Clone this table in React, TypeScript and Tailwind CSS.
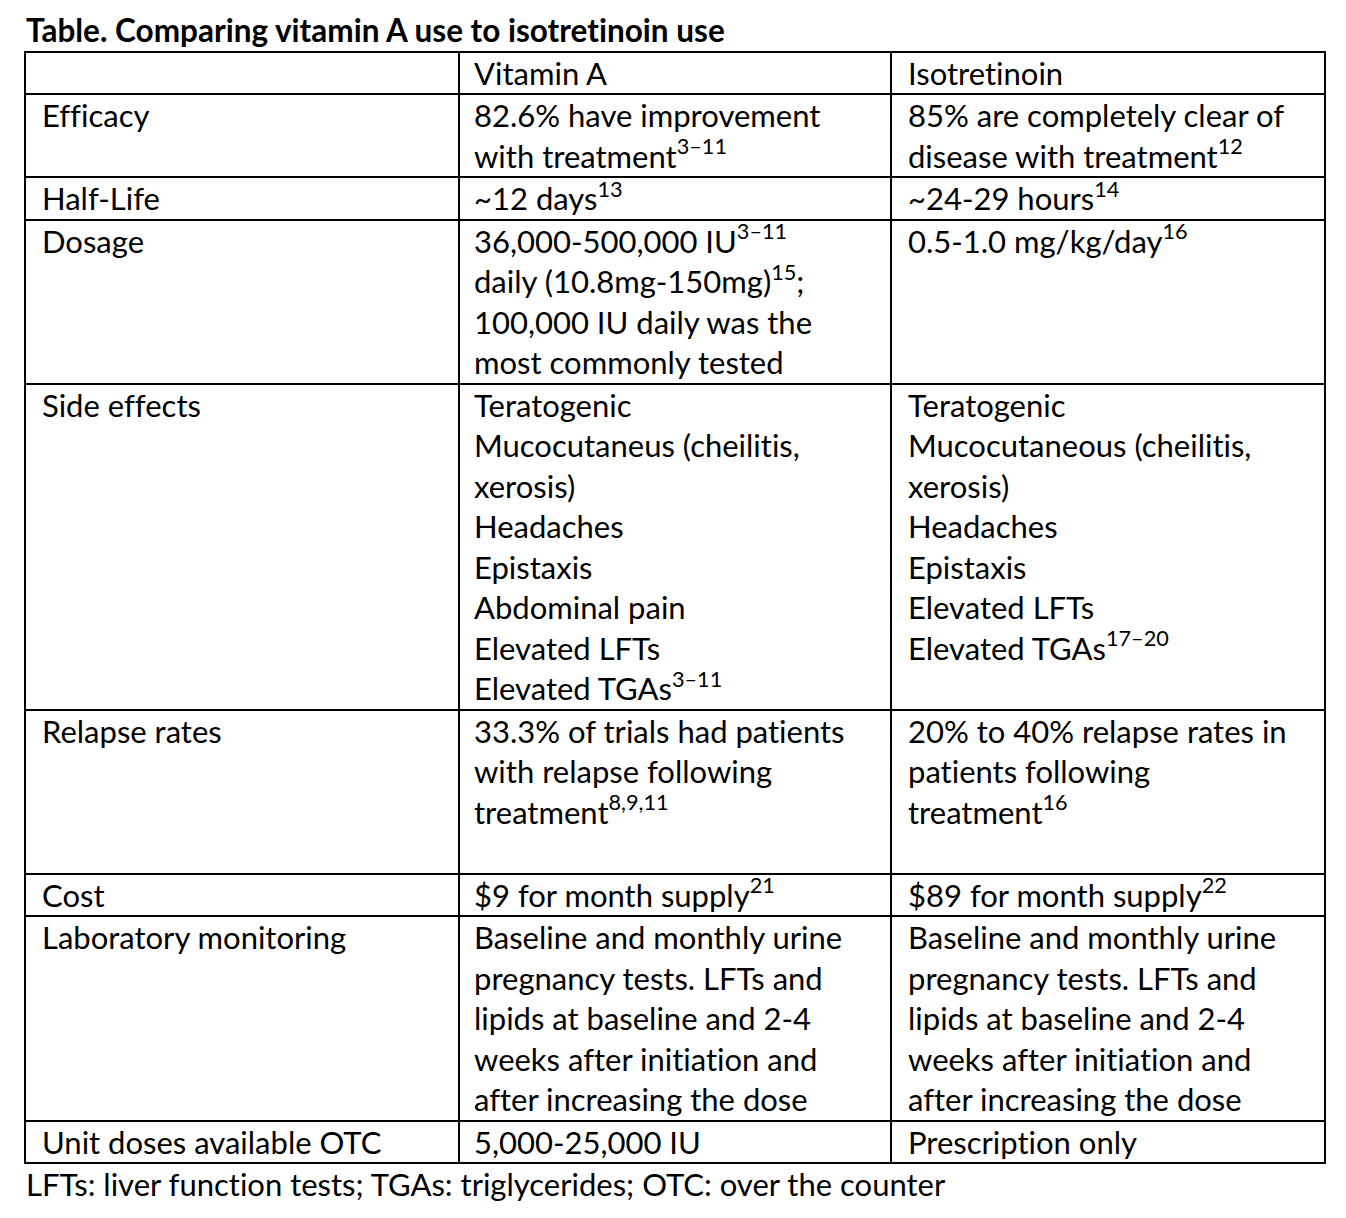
import type { ReactNode } from "react";

type Line = string | { t: string; s: string; after?: string };

type Row = { label: string; a: Line[]; b: Line[] };

const rows: Row[] = [
  { label: "", a: ["Vitamin A"], b: ["Isotretinoin"] },
  {
    label: "Efficacy",
    a: ["82.6% have improvement", { t: "with treatment", s: "3–11" }],
    b: ["85% are completely clear of", { t: "disease with treatment", s: "12" }],
  },
  {
    label: "Half-Life",
    a: [{ t: "~12 days", s: "13" }],
    b: [{ t: "~24-29 hours", s: "14" }],
  },
  {
    label: "Dosage",
    a: [
      { t: "36,000-500,000 IU", s: "3–11" },
      { t: "daily (10.8mg-150mg)", s: "15", after: ";" },
      "100,000 IU daily was the",
      "most commonly tested",
    ],
    b: [{ t: "0.5-1.0 mg/kg/day", s: "16" }],
  },
  {
    label: "Side effects",
    a: [
      "Teratogenic",
      "Mucocutaneus (cheilitis,",
      "xerosis)",
      "Headaches",
      "Epistaxis",
      "Abdominal pain",
      "Elevated LFTs",
      { t: "Elevated TGAs", s: "3–11" },
    ],
    b: [
      "Teratogenic",
      "Mucocutaneous (cheilitis,",
      "xerosis)",
      "Headaches",
      "Epistaxis",
      "Elevated LFTs",
      { t: "Elevated TGAs", s: "17–20" },
    ],
  },
  {
    label: "Relapse rates",
    a: [
      "33.3% of trials had patients",
      "with relapse following",
      { t: "treatment", s: "8,9,11" },
      "",
    ],
    b: ["20% to 40% relapse rates in", "patients following", { t: "treatment", s: "16" }],
  },
  {
    label: "Cost",
    a: [{ t: "$9 for month supply", s: "21" }],
    b: [{ t: "$89 for month supply", s: "22" }],
  },
  {
    label: "Laboratory monitoring",
    a: [
      "Baseline and monthly urine",
      "pregnancy tests. LFTs and",
      "lipids at baseline and 2-4",
      "weeks after initiation and",
      "after increasing the dose",
    ],
    b: [
      "Baseline and monthly urine",
      "pregnancy tests. LFTs and",
      "lipids at baseline and 2-4",
      "weeks after initiation and",
      "after increasing the dose",
    ],
  },
  { label: "Unit doses available OTC", a: ["5,000-25,000 IU"], b: ["Prescription only"] },
];

const renderLine = (line: Line, i: number): ReactNode => {
  if (typeof line === "string") {
    return (
      <div key={i} className="whitespace-nowrap">
        {line === "" ? "\u00a0" : line}
      </div>
    );
  }
  return (
    <div key={i} className="whitespace-nowrap">
      {line.t}
      <sup className="relative -top-[0.6em] align-baseline text-[0.7em] leading-none">{line.s}</sup>
      {line.after}
    </div>
  );
};

const App = () => {
  return (
    <div
      className="min-h-[1218px] w-[1346px] bg-white pt-[10px] text-black [font-variant-ligatures:none]"
      style={{ fontFamily: "Lato, 'Noto Sans', sans-serif" }}
    >
      {/* Caption */}
      <h1 className="ml-[26px] whitespace-nowrap text-[31.5px] font-bold leading-[40.5px]">
        Table. Comparing vitamin A use to isotretinoin use
      </h1>

      {/* Comparison table */}
      <div className="ml-[24px] grid w-[1302px] grid-cols-[434px_432px_434px] border-l-2 border-t-2 border-black text-[31px] leading-[40.5px]">
        {rows.map((row, r) => (
          <div key={r} className="contents">
            <div className="whitespace-nowrap border-b-2 border-r-2 border-black pl-[16px]">
              {row.label === "" ? "\u00a0" : row.label}
            </div>
            <div className="border-b-2 border-r-2 border-black pl-[14px]">{row.a.map(renderLine)}</div>
            <div className="border-b-2 border-r-2 border-black pl-[16px]">{row.b.map(renderLine)}</div>
          </div>
        ))}
      </div>

      <p className="ml-[26px] whitespace-nowrap text-[31px] leading-[40.5px]">
        LFTs: liver function tests; TGAs: triglycerides; OTC: over the counter
      </p>
    </div>
  );
};

export default App;
